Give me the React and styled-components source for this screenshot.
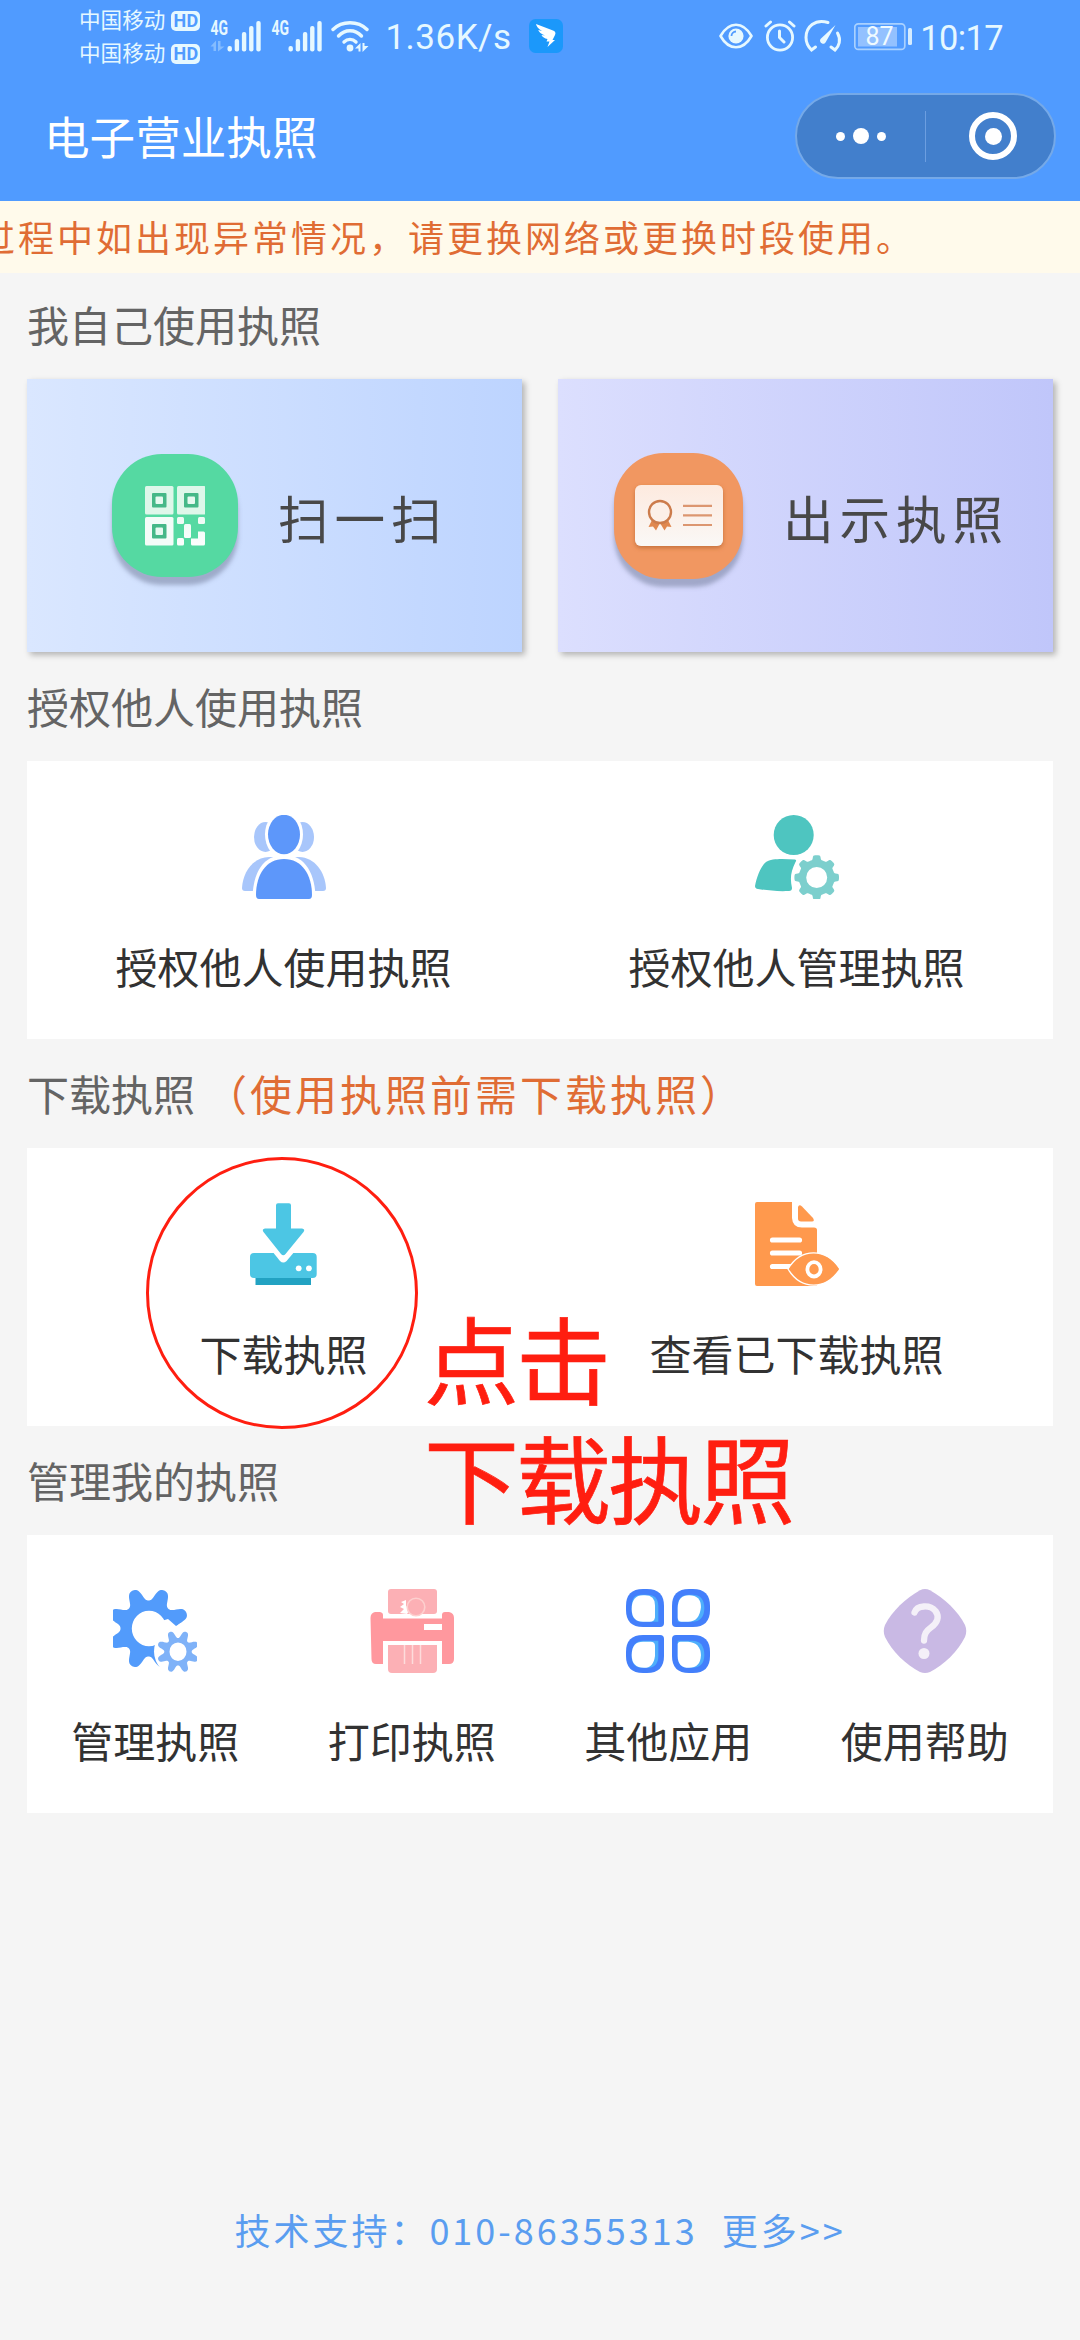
import React from 'react';
import styled, { createGlobalStyle } from 'styled-components';

const Global = createGlobalStyle`
  * { box-sizing: border-box; }
  html, body { margin: 0; padding: 0; background: #f5f5f5; }
  body { font-family: "Noto Sans CJK SC", "Noto Sans", sans-serif; }
  svg { display: block; flex: none; }
`;

const Screen = styled.div`
  position: relative;
  width: 1080px;
  height: 2340px;
  display: flex;
  flex-direction: column;
  background: #f5f5f5;
  overflow: hidden;
`;

const Header = styled.header`
  height: 201px;
  background: #509bff;
  color: #fff;
`;

const StatusBar = styled.div`
  height: 71px;
  padding: 0 77px 0 79px;
  display: flex;
  justify-content: space-between;
  color: #e6f8ff;
`;

const StatusGroup = styled.div`
  display: flex;
  align-items: flex-start;
`;

const Carriers = styled.div`
  display: flex;
  flex-direction: column;
  padding-top: 2px;
`;

const Carrier = styled.div`
  height: 33px;
  display: flex;
  align-items: center;
  gap: 6px;
  font-size: 21.6px;
  line-height: 33px;
`;

const HdBadge = styled.span`
  width: 29px;
  height: 20px;
  margin-top: 4px;
  border-radius: 5px;
  background: #e6f8ff;
  color: #509bff;
  font: 700 18px/20px Roboto, sans-serif;
  letter-spacing: 0.2px;
  text-align: center;
`;

const StatusText = styled.span`
  margin-left: ${(p) => p.$left}px;
  padding-top: 16px;
  font: 400 ${(p) => p.$size}px/44px Roboto, sans-serif;
  letter-spacing: ${(p) => p.$spacing || 0}px;
  white-space: nowrap;
`;

const TitleBar = styled.div`
  height: 130px;
  padding: 0 24px 0 44px;
  display: flex;
  align-items: center;
  justify-content: space-between;
`;

const Title = styled.h1`
  margin: 0;
  font-size: 45.6px;
  line-height: 64px;
  font-weight: 400;
  padding-bottom: 2px;
`;

const Capsule = styled.div`
  width: 261px;
  height: 86px;
  border: 2px solid #75a9e8;
  border-radius: 43px;
  background: #427fcc;
  display: flex;
  align-items: center;
`;

const CapsuleHalf = styled.div`
  flex: none;
  width: 128px;
  display: flex;
  align-items: center;
  justify-content: center;
  gap: 8px;
  padding: 0 ${(p) => p.$right || 0}px 0 ${(p) => p.$left || 0}px;
`;

const CapsuleLine = styled.div`
  width: 1px;
  height: 51px;
  background: #6c9ee0;
`;

const Dot = styled.i`
  width: ${(p) => p.$size}px;
  height: ${(p) => p.$size}px;
  border-radius: 50%;
  background: #fff;
`;

const Ring = styled.div`
  width: 48px;
  height: 48px;
  border: 6px solid #fff;
  border-radius: 50%;
  display: flex;
  align-items: center;
  justify-content: center;
`;

const Notice = styled.div`
  height: 72px;
  background: #fffaeb;
  color: #e06c34;
  font-size: 36px;
  line-height: 70px;
  letter-spacing: 3px;
  white-space: nowrap;
  overflow: hidden;
  text-indent: -21px;
`;

const Main = styled.main`
  padding: 0 27px;
`;

const Heading = styled.h2`
  margin: 0;
  height: ${(p) => p.$height || 109}px;
  padding-bottom: ${(p) => p.$lift || 2}px;
  display: flex;
  align-items: center;
  font-size: 42px;
  font-weight: 400;
  color: #646464;
`;

const Hint = styled.span`
  margin-left: 10px;
  color: #e06c34;
  letter-spacing: 3px;
`;

const CardRow = styled.div`
  display: grid;
  grid-template-columns: 1fr 1fr;
  gap: 36px;
`;

const ActionCard = styled.div`
  height: 273px;
  padding-left: ${(p) => p.$pad}px;
  display: flex;
  align-items: center;
  background: linear-gradient(90deg, ${(p) => p.$from}, ${(p) => p.$to});
  box-shadow: 3px 3px 6px rgba(0, 0, 0, 0.27);
`;

const Badge = styled.div`
  width: ${(p) => p.$w}px;
  height: ${(p) => p.$h}px;
  border-radius: 50px;
  background: ${(p) => p.$color};
  box-shadow: 0 8px 4px rgba(110, 120, 150, 0.5);
  display: flex;
  align-items: center;
  justify-content: center;
`;

const ActionText = styled.span`
  margin-left: 40px;
  font-size: 50.6px;
  line-height: 72px;
  letter-spacing: 5.9px;
  color: #484848;
  padding-top: 2px;
  white-space: nowrap;
`;

const Panel = styled.div`
  height: 278px;
  display: grid;
  grid-template-columns: repeat(${(p) => p.$cols}, 1fr);
  background: #fff;
`;

const Item = styled.div`
  padding-top: 54px;
  display: flex;
  flex-direction: column;
  align-items: center;
  gap: 37px;
  font-size: 42px;
  line-height: 60px;
  color: #323232;
  white-space: nowrap;
`;

const Footer = styled.footer`
  margin-top: auto;
  height: 220px;
  display: flex;
  justify-content: center;
  gap: 24px;
  font-size: 36px;
  line-height: 54px;
  padding-top: 82px;
  letter-spacing: 3px;
  color: #5a9df0;
`;

const Circle = styled.div`
  position: absolute;
  left: 146px;
  top: 1157px;
  width: 272px;
  height: 272px;
  border: 3px solid #ff1e10;
  border-radius: 50%;
`;

const Callout = styled.div`
  position: absolute;
  left: 424px;
  top: 1297px;
  display: flex;
  flex-direction: column;
  align-items: flex-start;
  font-size: 95px;
  line-height: 119px;
  letter-spacing: -3px;
  -webkit-text-stroke: 0.7px #ff1e10;
  color: #ff1e10;
  white-space: nowrap;
`;

function gearPath(cx, cy, mid, amp, teeth, offset, k) {
  const pts = [];
  for (let i = 0; i < 240; i++) {
    const t = (i / 240) * Math.PI * 2;
    const r = mid + (amp * Math.tanh(k * Math.cos(teeth * (t - offset)))) / Math.tanh(k);
    pts.push(`${(cx + r * Math.cos(t)).toFixed(2)} ${(cy + r * Math.sin(t)).toFixed(2)}`);
  }
  return `M${pts.join('L')}Z`;
}

const Signal = ({ data }) => (
  <svg width="52" height="56" viewBox="0 0 52 56" fill="currentColor">
    <text x="0.5" y="35" fontFamily="Roboto, sans-serif" fontWeight="700" fontSize="19.5" textLength="17.5" lengthAdjust="spacingAndGlyphs">4G</text>
    {data && <path opacity="0.35" d="M0.500 46.500L6 40.500V51H3.500V46.500ZM8 41H10.500V46.500H14.500L8 51.500Z" />}
    {[46, 39, 32, 26, 21].map((y, i) => (
      <rect key={y} x={17.5 + i * 7.2} y={y} width="4.4" height={51.5 - y} rx="2" />
    ))}
  </svg>
);

const Wifi = () => (
  <svg width="38" height="56" viewBox="0 0 38 56" fill="none" stroke="currentColor" strokeWidth="3.4" strokeLinecap="round">
    <path d="M2 29.500C11 20.500 27 20.500 36 29.500" />
    <path d="M7.500 36C14 29 24 29 30.500 36" />
    <path d="M13 42C16.500 38.500 21.500 38.500 25 42" />
    <circle cx="19" cy="48" r="3.400" fill="currentColor" stroke="none" />
    <path d="M24 48.500L29.500 43V51.500H27.500V48.500ZM31.500 43H33.500V46H37.500L31.500 52Z" fill="currentColor" stroke="none" />
  </svg>
);

const Bird = () => (
  <svg width="34" height="56" viewBox="0 0 34 56">
    <rect x="0" y="19" width="34" height="34" rx="6.500" fill="#1b98fb" />
    <path fill="#fff" d="M7 24L24 30.500C26.500 31.500 27 33 26 35L23.500 40H26L18.500 47L20.500 41.500H17.500L18.500 39C15.500 38.500 13.500 37 12.500 35L16 35.500C12 34 10 32 9.200 30L13 31C9 28.500 7.500 26.500 7 24Z" />
  </svg>
);

const Eye = () => (
  <svg width="34" height="56" viewBox="0 0 34 56" fill="none" stroke="currentColor">
    <path strokeWidth="2.600" strokeLinejoin="round" d="M1.500 36C10 21 24 21 32.500 36C24 51 10 51 1.500 36Z" />
    <circle cx="17" cy="36" r="7.600" fill="currentColor" stroke="none" />
    <path d="M12.500 36A4.500 4.500 0 0 1 17 31.500" stroke="#509bff" strokeWidth="1.800" />
  </svg>
);

const Alarm = () => (
  <svg width="32" height="56" viewBox="0 0 32 56" fill="none" stroke="currentColor" strokeLinecap="round">
    <circle cx="16" cy="37.500" r="12.600" strokeWidth="2.800" />
    <path strokeWidth="3" d="M15.500 31V37.500L20 42M2 26L6.500 22M25.500 22L30 26" />
  </svg>
);

const Gauge = () => (
  <svg width="38" height="56" viewBox="0 0 38 56" fill="none" stroke="currentColor" strokeLinecap="round">
    <path strokeWidth="3" d="M24 22.500C11 18.500 2 27 2 37.500C2 43 4 46.500 7.500 50L11.500 47M33.500 33C37.500 40 35 46.500 31 50L27 47" />
    <path d="M31.500 25L21.500 42.500C19.500 45.500 14.500 42.500 16.500 39Z" fill="currentColor" stroke="none" />
  </svg>
);

const Battery = () => (
  <svg width="58" height="56" viewBox="0 0 58 56">
    <rect x="0.800" y="23.800" width="50" height="25.600" rx="3.500" fill="none" stroke="#a9d1ff" strokeWidth="1.700" />
    <rect x="4" y="27" width="39" height="19.500" fill="#93c1ff" />
    <rect x="54" y="28" width="4" height="17" rx="1.500" fill="#d5ecff" />
    <text x="11.5" y="45.300" fontFamily="Roboto, sans-serif" fontSize="25" fill="#f0fbff">87</text>
  </svg>
);

const QrIcon = () => (
  <svg width="60" height="60" viewBox="0 0 60 60">
    <defs>
      <linearGradient id="qr" x1="0" y1="0" x2="0" y2="60" gradientUnits="userSpaceOnUse">
        <stop offset="0" stopColor="#def7ea" />
        <stop offset="1" stopColor="#fdfefe" />
      </linearGradient>
    </defs>
    {[[0, 0], [32, 0], [0, 31]].map(([x, y]) => (
      <g key={`${x}-${y}`} transform={`translate(${x} ${y})`}>
        <rect width="28.500" height="28.500" rx="1.500" fill={y ? '#f3fcf8' : '#def7ea'} />
        <rect x="7" y="7" width="14.500" height="14.500" rx="1" fill="#45b888" />
        <rect x="10.500" y="10.500" width="7.500" height="7.500" rx="1" fill="#e6f9f0" />
      </g>
    ))}
    <g fill="url(#qr)">
      <rect x="32" y="31" width="7" height="7" rx="1.500" />
      <rect x="53" y="31" width="7" height="7" rx="1.500" />
      <rect x="39" y="38" width="7" height="14" rx="1.500" />
      <rect x="32" y="52" width="7" height="7.500" rx="1.500" />
      <path d="M53 45.500H58.500Q60 45.500 60 47V58Q60 59.500 58.500 59.500H47.500Q46 59.500 46 58V52.500H53Z" />
    </g>
  </svg>
);

const LicenseIcon = () => (
  <svg width="100" height="74" viewBox="-6 -6 100 74">
    <defs>
      <linearGradient id="lic" x1="0" y1="0" x2="0" y2="1">
        <stop offset="0" stopColor="#fdeadf" />
        <stop offset="1" stopColor="#faf8f6" />
      </linearGradient>
      <filter id="licShadow" x="-20%" y="-20%" width="140%" height="150%">
        <feDropShadow dx="0" dy="2" stdDeviation="2" floodColor="#a85828" floodOpacity="0.6" />
      </filter>
    </defs>
    <rect width="88" height="61" rx="6" fill="url(#lic)" filter="url(#licShadow)" />
    <g fill="#e0884f">
      <path d="M17 35L13.500 42L18 41.500L21 45.500L25 38L29.500 45.500L32 41.500L36.500 42L33 35Z" />
      <circle cx="25" cy="27" r="11" fill="#fcf0e8" stroke="#cc7c4c" strokeWidth="2.400" />
    </g>
    <path d="M48 20.800H77M48 30.400H77M48 40H77" stroke="#dc9670" strokeWidth="2.200" />
  </svg>
);

const Glyph = ({ children }) => (
  <svg width="84" height="84" viewBox="0 0 84 84" fill="none">{children}</svg>
);

const UsersIcon = () => (
  <Glyph>
    <ellipse cx="23.500" cy="22" rx="11.500" ry="15" fill="#a8c6fb" />
    <ellipse cx="60.500" cy="22" rx="11.500" ry="15" fill="#a8c6fb" />
    <path fill="#a8c6fb" d="M0 73C1 57 11 42.500 27 42H57C73 42.500 83 57 84 73Q84 76 81 76H3Q0 76 0 73Z" />
    <path fill="#fff" d="M10.500 84C10.500 60 20 40 42 40S73.500 60 73.500 84Z" />
    <ellipse cx="42" cy="19.500" rx="19" ry="24" fill="#fff" />
    <ellipse cx="42" cy="19.500" rx="16" ry="19.700" fill="#5d97fa" />
    <path fill="#5d97fa" d="M14 80C14 60 24 44 42 44S70 60 70 80Q70 84 67 84H17Q14 84 14 80Z" />
  </Glyph>
);

const UserGearIcon = () => (
  <Glyph>
    <circle cx="38.700" cy="20" r="20" fill="#4ec5c0" />
    <path fill="#4ec5c0" d="M0 71C2 61 6 51 11 47C17 43 30 44 40 44.500Q42 45 40.500 47C35.500 57 35 64 37 73Q37 76 34 76C22 76.500 12 75.500 3 74Q0 73.500 0 71Z" />
    <path fill="#7ccfcd" fillRule="evenodd" d={`${gearPath(61.7, 62.5, 20.1, 2.2, 8, 0, 3)}M51.200 62.500a10.500 10.500 0 1 0 21 0a10.500 10.500 0 1 0 -21 0Z`} />
  </Glyph>
);

const DownloadIcon = () => (
  <Glyph>
    <rect x="8" y="51" width="66.700" height="25" rx="4" fill="#4cc6e4" />
    <path fill="#22a2c2" d="M13.500 76H69V83H13.500Z" />
    <path fill="#fff" d="M30 49L38 59Q41.300 62 44.600 59L53 49Z" />
    <path fill="#4cc6e4" d="M36 1.300H47Q49 1.300 49 3.300V26.500H60Q63.500 27 61.500 30L43.500 52Q41.300 54.700 39 52L21.500 30Q19.500 27 23 26.500H34V3.300Q34 1.300 36 1.300Z" />
    <circle cx="56.700" cy="66.300" r="2.900" fill="#fff" />
    <circle cx="66.900" cy="66.300" r="2.900" fill="#fff" />
  </Glyph>
);

const DocumentIcon = () => (
  <Glyph>
    <path fill="#ff994d" d="M2 0H37V16Q37.500 25.500 47 25.500H59Q62 25.500 62 28V84H2Q0 84 0 82V2Q0 0 2 0Z" />
    <path fill="#ff994d" d="M43 5Q44 2 47 4.500L58 16Q60 19.500 57 19.500H46Q43 19.500 43 16.500Z" />
    <path stroke="#fff" strokeWidth="5.200" strokeLinecap="round" d="M17.500 38H44.500M17.500 51H44.500M17.500 64.500H38" />
    <path fill="#ff994d" stroke="#fff" strokeWidth="1.400" d="M33 67C46 45.500 71 45.500 85 67C71 88.500 46 88.500 33 67Z" />
    <ellipse cx="59" cy="67.300" rx="6.600" ry="7.200" stroke="#fff" strokeWidth="3.800" />
  </Glyph>
);

const GearsIcon = () => (
  <Glyph>
    <path fill="#529bfb" fillRule="evenodd" d={`${gearPath(35.5, 39.5, 34.5, 6.5, 8, Math.PI / 8, 1.3)}M18.800 39.500a17.200 17.800 0 1 0 34.400 0a17.200 17.800 0 1 0 -34.400 0Z`} />
    <circle cx="66" cy="62.500" r="25" fill="#fff" />
    <path fill="#fff" d="M50 31.500L55 30L63 37L70 33L84 46V84H56L44 52Z" />
    <path fill="#7fb2f8" fillRule="evenodd" d={`${gearPath(65, 62.7, 17.5, 3.8, 8, Math.PI / 8, 1.3)}M56.500 62.700a8.500 9.300 0 1 0 17 0a8.500 9.300 0 1 0 -17 0Z`} />
  </Glyph>
);

const PrinterIcon = () => (
  <Glyph>
    <rect x="18" y="0" width="49" height="25" rx="3" fill="#fcb0b5" />
    <path fill="#fff" d="M36 11L31 13L34 15L30 18L34 20L30 24L37 25L40 20L36 17Z" />
    <circle cx="46" cy="18" r="8.800" fill="#fcb0b5" stroke="#fdd0cf" strokeWidth="1.600" />
    <path fill="#ff989e" d="M5 23H10Q13 23.500 13 26V29.500H72V26Q72 23 75 23H79Q84 24 84 29V70Q84 75 79 75H72V52H13V75H6Q1.500 75 1.500 70L0.500 29Q0.500 24 5 23Z" />
    <path fill="#fff" d="M54 35H72V41H54Z" />
    <path fill="#fcb0b5" d="M18 56H67V80Q67 84 63 84H22Q18 84 18 80Z" />
    <path stroke="#fddcdc" strokeWidth="1.500" d="M34.500 56V75M42.500 56V75M50.500 56V75" />
  </Glyph>
);

const petals = [
  {
    center: [19, 19],
    outer: 'M17 0H21Q38 0 38 17V34Q38 38 34 38H17Q0 38 0 21V17Q0 0 17 0Z',
    glow: 'M15 5H21Q33 5 33 17V33.500H17Q5 33.500 5 21V17Q5 5 15 5Z',
    inner: 'M17 5.500H19Q29.500 5.500 29.500 16V29Q29 33.500 24 33.500H17Q5 33.500 5 20Q5 5.500 17 5.500Z',
  },
  {
    center: [65, 19],
    outer: 'M63 0H67Q84 0 84 17V21Q84 38 67 38H50Q46 38 46 34V17Q46 0 63 0Z',
    glow: 'M63 5H66Q79 5 79 19Q79 33.500 66 33.500H51V18Q51 5 63 5Z',
    inner: 'M63 5.500Q75.500 5.500 75.500 18Q74 33.500 62 33.500H55Q51 33.500 51 29V19Q51 5.500 63 5.500Z',
  },
  {
    center: [19, 65],
    outer: 'M17 46H34Q38 46 38 50V67Q38 84 21 84H17Q0 84 0 67V63Q0 46 17 46Z',
    glow: 'M17 51H33V67Q33 79.500 21 79.500H17Q5 79.500 5 67Q5 51 17 51Z',
    inner: 'M17 52H25Q29.500 52 29.500 56V67Q28 79.500 18 79.500Q5 79.500 5 66Q5 52 17 52Z',
  },
  {
    center: [65, 65],
    outer: 'M50 46H67Q84 46 84 63V67Q84 84 67 84H63Q46 84 46 67V50Q46 46 50 46Z',
    glow: 'M51 51H66Q79 51 79 66Q79 79.500 66 79.500H63Q51 79.500 51 67Z',
    inner: 'M54 52H62Q75 53 75.500 66Q75 79.500 63 79.500Q51 79.500 51 67V55Q51 52 54 52Z',
  },
];

const AppsIcon = () => (
  <Glyph>
    {petals.map(({ center: [x, y], outer, glow, inner }) => (
      <g key={outer}>
        <path d={outer} fill="#437ffb" />
        <g transform={`translate(${x} ${y}) scale(0.95) translate(${-x} ${-y})`}>
          <path d={glow} fill="#4eaefb" />
          <path d={inner} fill="#fff" />
        </g>
      </g>
    ))}
  </Glyph>
);

const HelpIcon = () => (
  <Glyph>
    <path fill="#c9b9e4" d="M37 1.200Q42 -1.200 47 1.200C61 9 75 22 82 36Q84.500 42 82 48C75 62 61 76 47 83Q42 85 37 83C23 76 9 62 2 48Q-0.500 42 2 36C9 22 23 9 37 1.200Z" />
    <path stroke="#f4f0f8" strokeWidth="6.300" strokeLinecap="round" d="M31.500 23.500C34 16 47 15.500 52.500 22C57 28 54 34 48.500 38C43 42 41 45 41 51.500" />
    <circle cx="41" cy="64.500" r="5.500" fill="#f4f0f8" />
  </Glyph>
);

const MenuPanel = ({ items }) => (
  <Panel $cols={items.length}>
    {items.map(([label, Icon]) => (
      <Item key={label}>
        <Icon />
        <span>{label}</span>
      </Item>
    ))}
  </Panel>
);

const Gap = styled.span`
  width: ${(p) => p.$w}px;
  flex: none;
`;

export default function App() {
  return (
    <Screen>
      <Global />
      <Header>
        <StatusBar>
          <StatusGroup>
            <Carriers>
              <Carrier>中国移动<HdBadge>HD</HdBadge></Carrier>
              <Carrier>中国移动<HdBadge>HD</HdBadge></Carrier>
            </Carriers>
            <Gap $w={10} />
            <Signal data />
            <Gap $w={9} />
            <Signal />
            <Gap $w={8} />
            <Wifi />
            <StatusText $left={16} $size={35} $spacing={0.5}>1.36K/s</StatusText>
            <Gap $w={17} />
            <Bird />
          </StatusGroup>
          <StatusGroup>
            <Eye />
            <Gap $w={11} />
            <Alarm />
            <Gap $w={8} />
            <Gauge />
            <Gap $w={12} />
            <Battery />
            <StatusText $left={8} $size={34.4} $spacing={-0.6}>10:17</StatusText>
          </StatusGroup>
        </StatusBar>
        <TitleBar>
          <Title>电子营业执照</Title>
          <Capsule>
            <CapsuleHalf $right={1}>
              <Dot $size={9} />
              <Dot $size={16} />
              <Dot $size={9} />
            </CapsuleHalf>
            <CapsuleLine />
            <CapsuleHalf $left={6}>
              <Ring><Dot $size={17} /></Ring>
            </CapsuleHalf>
          </Capsule>
        </TitleBar>
      </Header>
      <Notice>过程中如出现异常情况，请更换网络或更换时段使用。</Notice>
      <Main>
        <Heading $height={106} $lift={5}>我自己使用执照</Heading>
        <CardRow>
          <ActionCard $pad={85} $from="#dae7ff" $to="#bdd4ff">
            <Badge $w={126} $h={123} $color="#55d9a2"><QrIcon /></Badge>
            <ActionText>扫一扫</ActionText>
          </ActionCard>
          <ActionCard $pad={56} $from="#dcdffe" $to="#c0c6fa">
            <Badge $w={129} $h={126} $color="#f19761"><LicenseIcon /></Badge>
            <ActionText>出示执照</ActionText>
          </ActionCard>
        </CardRow>
        <Heading>授权他人使用执照</Heading>
        <MenuPanel items={[['授权他人使用执照', UsersIcon], ['授权他人管理执照', UserGearIcon]]} />
        <Heading>下载执照<Hint>（使用执照前需下载执照）</Hint></Heading>
        <MenuPanel items={[['下载执照', DownloadIcon], ['查看已下载执照', DocumentIcon]]} />
        <Heading>管理我的执照</Heading>
        <MenuPanel
          items={[
            ['管理执照', GearsIcon],
            ['打印执照', PrinterIcon],
            ['其他应用', AppsIcon],
            ['使用帮助', HelpIcon],
          ]}
        />
      </Main>
      <Footer>
        <span>技术支持：010-86355313</span>
        <span>更多&gt;&gt;</span>
      </Footer>
      <Circle />
      <Callout>
        <span>点击</span>
        <span>下载执照</span>
      </Callout>
    </Screen>
  );
}
